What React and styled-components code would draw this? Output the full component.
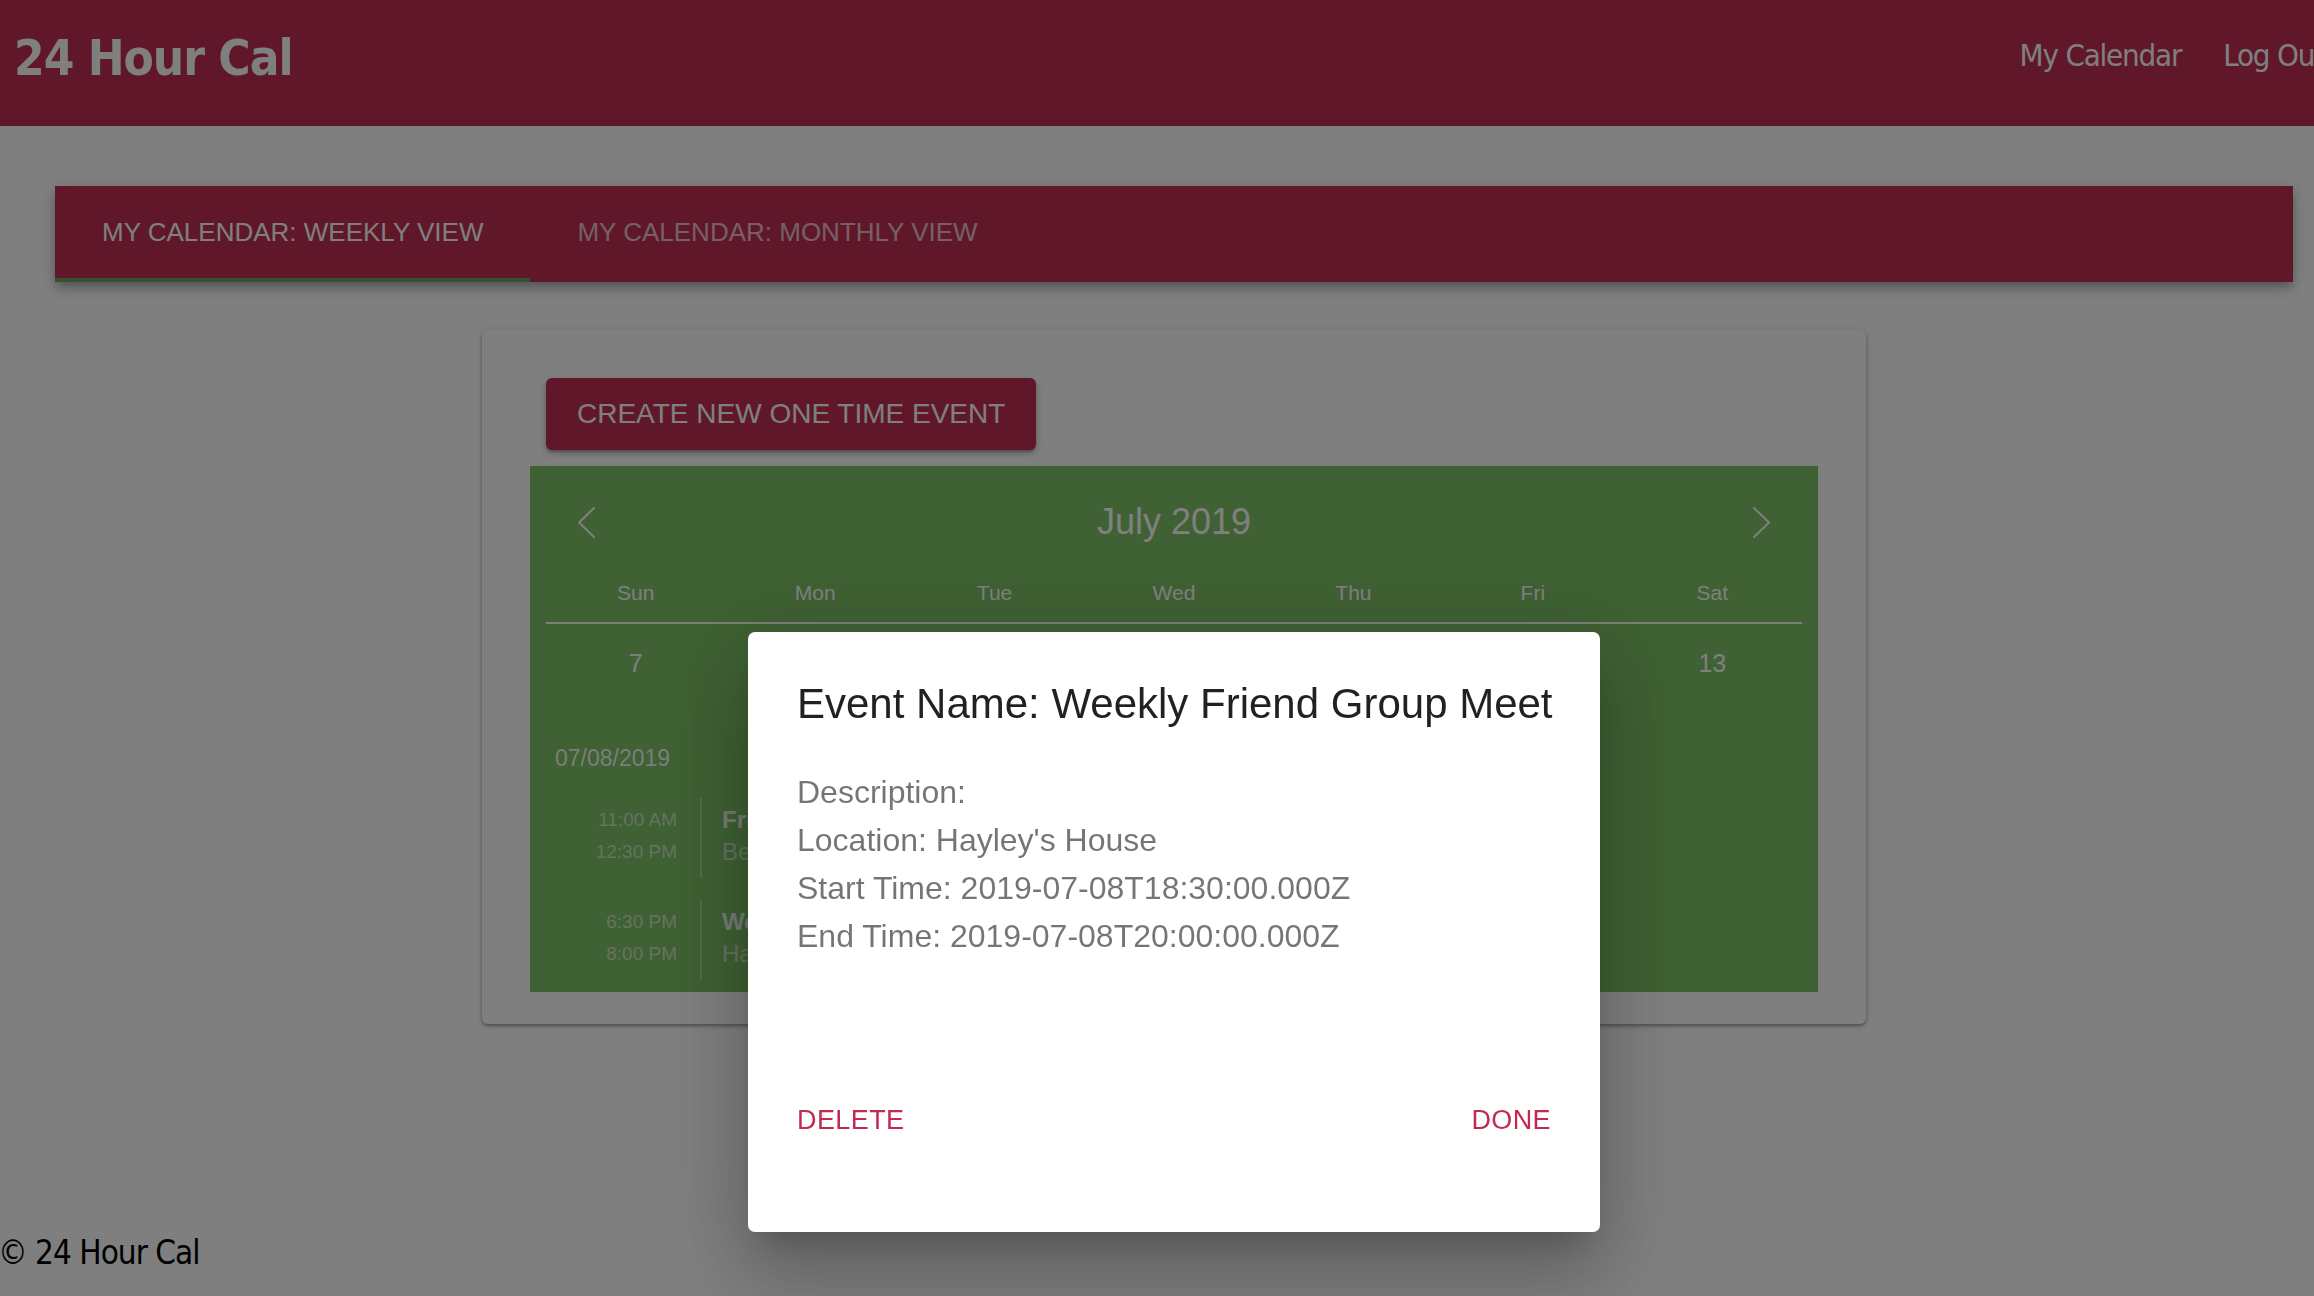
import React from "react";
import styled, { createGlobalStyle } from "styled-components";

const GlobalStyle = createGlobalStyle`
  html, body { margin: 0; padding: 0; }
  html { overflow: hidden; }
  body { background: #ffffff; font-family: "Liberation Sans", Arial, sans-serif; }
  * { box-sizing: border-box; }
`;

const PRIMARY = "#be2e52";
const GREEN = "#7ec266";

const Page = styled.div`
  width: 2348px;
  min-height: 1296px;
  display: flex;
  flex-direction: column;
`;

const Header = styled.header`
  height: 126px;
  background: ${PRIMARY};
  display: flex;
  align-items: center;
  justify-content: space-between;
  padding: 0 24px 0 14px;
  font-family: "DejaVu Sans Condensed", "DejaVu Sans", sans-serif;
  color: #ffffff;
`;

const Brand = styled.div`
  font-size: 49px;
  font-weight: 700;
  letter-spacing: -1px;
  padding-bottom: 10px;
`;

const Nav = styled.nav`
  display: flex;
  gap: 42px;
  font-size: 31px;
  letter-spacing: -1.2px;
  padding-bottom: 17px;
`;

const NavLink = styled.span`
  white-space: nowrap;
`;

const TabsBar = styled.div`
  margin: 60px 55px 0;
  height: 96px;
  background: ${PRIMARY};
  display: flex;
  box-shadow: 0 4px 8px -2px rgba(0,0,0,0.2), 0 8px 10px 0 rgba(0,0,0,0.14), 0 2px 20px 0 rgba(0,0,0,0.12);
`;

const Tab = styled.div`
  display: flex;
  align-items: center;
  padding: 0 47px 3px;
  font-size: 26px;
  text-transform: uppercase;
  color: #ffffff;
  opacity: ${(p) => (p.$active ? 1 : 0.7)};
  box-shadow: ${(p) => (p.$active ? "inset 0 -4px 0 #6aa458" : "none")};
  white-space: nowrap;
`;

const Card = styled.section`
  width: 1384px;
  margin: 48px auto 0;
  padding: 48px 48px 32px;
  background: #ffffff;
  border-radius: 6px;
  box-shadow: 0 2px 3px rgba(0,0,0,0.2), 0 2px 4px rgba(0,0,0,0.14), 0 1px 8px rgba(0,0,0,0.12);
  display: flex;
  flex-direction: column;
  align-items: flex-start;
`;

const CreateButton = styled.button`
  height: 72px;
  margin-left: 16px;
  padding: 0 31px;
  border: none;
  border-radius: 6px;
  background: ${PRIMARY};
  color: #ffffff;
  font-family: "Liberation Sans", Arial, sans-serif;
  font-size: 28px;
  text-transform: uppercase;
  box-shadow: 0 2px 2px rgba(0,0,0,0.2), 0 4px 6px rgba(0,0,0,0.14), 0 2px 10px rgba(0,0,0,0.12);
`;

const Calendar = styled.div`
  margin-top: 16px;
  width: 100%;
  height: 526px;
  overflow: hidden;
  background: ${GREEN};
  padding: 0 16px;
  color: #ffffff;
`;

const MonthHeader = styled.div`
  height: 112px;
  display: flex;
  align-items: center;
  justify-content: space-between;
  padding: 0 31px;
`;

const MonthTitle = styled.div`
  font-size: 36px;
`;

const Chevron = ({ dir }) => (
  <svg width="19" height="31" viewBox="0 0 19 31" fill="none">
    <polyline
      points={dir === "left" ? "17,1 2,15.5 17,30" : "2,1 17,15.5 2,30"}
      stroke="#ffffff"
      strokeWidth="2"
      strokeLinecap="round"
      strokeLinejoin="round"
    />
  </svg>
);

const WeekRow = styled.div`
  display: grid;
  grid-template-columns: repeat(7, 1fr);
  text-align: center;
  font-size: ${(p) => p.$size}px;
  line-height: 30px;
  padding: ${(p) => p.$pad};
  border-bottom: ${(p) => (p.$divider ? "2px solid rgba(255,255,255,0.95)" : "none")};
`;

const DateLabel = styled.div`
  margin-top: 65px;
  padding-left: 9px;
  font-size: 23px;
  line-height: 30px;
  color: rgba(255,255,255,0.95);
`;

const EventList = styled.div`
  margin-top: 25px;
  display: flex;
  flex-direction: column;
  gap: 22px;
`;

const EventRow = styled.div`
  display: flex;
  height: 80px;
`;

const TimeCol = styled.div`
  width: 131px;
  margin-right: 23px;
  padding-top: 6px;
  text-align: right;
  font-size: 19px;
  line-height: 32px;
  color: rgba(255,255,255,0.6);
`;

const EventBody = styled.div`
  width: 180px;
  overflow: hidden;
  white-space: nowrap;
  border-left: 2px solid rgba(255,255,255,0.3);
  padding: 6px 0 0 20px;
  font-size: 24px;
  line-height: 32px;
`;

const EventTitle = styled.div`
  font-weight: 700;
  color: rgba(255,255,255,0.9);
`;

const EventSub = styled.div`
  color: rgba(255,255,255,0.6);
`;

const Footer = styled.footer`
  margin-top: 209px;
  margin-left: -2px;
  font-family: "DejaVu Sans Condensed", "DejaVu Sans", sans-serif;
  font-size: 33px;
  line-height: 40px;
  letter-spacing: -1px;
  color: #000000;
`;

const Backdrop = styled.div`
  position: fixed;
  top: 0;
  left: 0;
  width: 2348px;
  height: 100vh;
  background: rgba(0,0,0,0.5);
  display: flex;
  justify-content: center;
  align-items: flex-start;
  padding-top: 632px;
`;

const Dialog = styled.div`
  width: 852px;
  height: 600px;
  background: #ffffff;
  border-radius: 7px;
  padding: 42px 49px 92px;
  display: flex;
  flex-direction: column;
  box-shadow: 0 22px 30px -14px rgba(0,0,0,0.2), 0 48px 76px 6px rgba(0,0,0,0.14), 0 18px 92px 16px rgba(0,0,0,0.12);
`;

const DialogTitle = styled.h2`
  margin: 0;
  font-size: 42px;
  font-weight: 400;
  line-height: 60px;
  color: rgba(0,0,0,0.87);
  white-space: nowrap;
`;

const DialogBody = styled.div`
  margin-top: 34px;
  font-size: 32px;
  line-height: 48px;
  color: rgba(0,0,0,0.54);
`;

const DialogActions = styled.div`
  margin-top: auto;
  display: flex;
  justify-content: space-between;
`;

const TextButton = styled.button`
  border: none;
  background: none;
  padding: 0;
  font-family: "Liberation Sans", Arial, sans-serif;
  font-size: 27px;
  line-height: 40px;
  letter-spacing: 0.4px;
  text-transform: uppercase;
  color: #c42a51;
`;

const weekdays = ["Sun", "Mon", "Tue", "Wed", "Thu", "Fri", "Sat"];
const days = [7, 8, 9, 10, 11, 12, 13];
const events = [
  { start: "11:00 AM", end: "12:30 PM", title: "Friends Brunch", sub: "Bella's Cafe" },
  { start: "6:30 PM", end: "8:00 PM", title: "Weekly Friend Group Meet", sub: "Hayley's House" },
];

export default function App() {
  return (
    <>
      <GlobalStyle />
      <Page>
        <Header>
          <Brand>24 Hour Cal</Brand>
          <Nav>
            <NavLink>My Calendar</NavLink>
            <NavLink>Log Out</NavLink>
          </Nav>
        </Header>
        <TabsBar>
          <Tab $active>My Calendar: Weekly View</Tab>
          <Tab>My Calendar: Monthly View</Tab>
        </TabsBar>
        <Card>
          <CreateButton>Create New One Time Event</CreateButton>
          <Calendar>
            <MonthHeader>
              <Chevron dir="left" />
              <MonthTitle>July 2019</MonthTitle>
              <Chevron dir="right" />
            </MonthHeader>
            <WeekRow $size={21} $pad="0 0 14px" $divider>
              {weekdays.map((d) => (
                <div key={d}>{d}</div>
              ))}
            </WeekRow>
            <WeekRow $size={25} $pad="24px 0 0">
              {days.map((d) => (
                <div key={d}>{d}</div>
              ))}
            </WeekRow>
            <DateLabel>07/08/2019</DateLabel>
            <EventList>
              {events.map((e) => (
                <EventRow key={e.start}>
                  <TimeCol>
                    <div>{e.start}</div>
                    <div>{e.end}</div>
                  </TimeCol>
                  <EventBody>
                    <EventTitle>{e.title}</EventTitle>
                    <EventSub>{e.sub}</EventSub>
                  </EventBody>
                </EventRow>
              ))}
            </EventList>
          </Calendar>
        </Card>
        <Footer>© 24 Hour Cal</Footer>
      </Page>
      <Backdrop>
        <Dialog>
          <DialogTitle>Event Name: Weekly Friend Group Meet</DialogTitle>
          <DialogBody>
            <div>Description: </div>
            <div>Location: Hayley's House</div>
            <div>Start Time: 2019-07-08T18:30:00.000Z</div>
            <div>End Time: 2019-07-08T20:00:00.000Z</div>
          </DialogBody>
          <DialogActions>
            <TextButton>Delete</TextButton>
            <TextButton>Done</TextButton>
          </DialogActions>
        </Dialog>
      </Backdrop>
    </>
  );
}
